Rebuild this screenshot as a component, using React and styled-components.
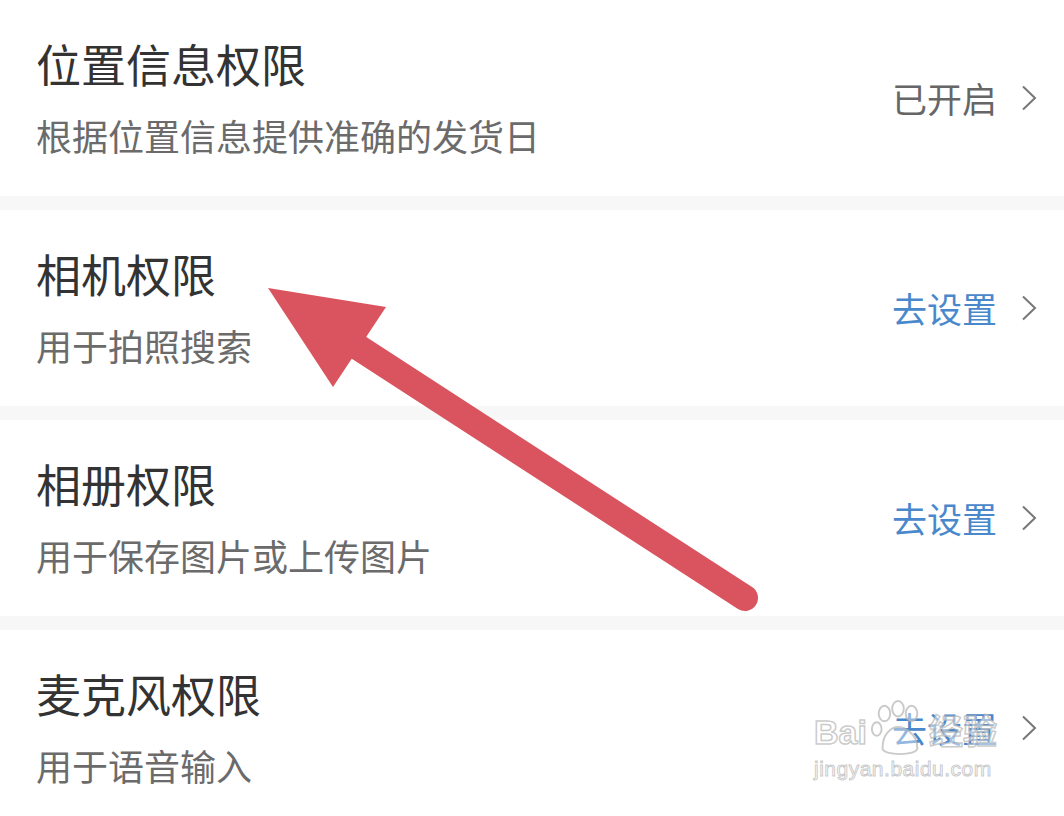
import React from "react";
import styled, { createGlobalStyle } from "styled-components";

const GlobalStyle = createGlobalStyle`
  html, body {
    margin: 0;
    padding: 0;
    background: #f7f7f7;
    overflow: hidden;
  }
  body {
    font-family: "Noto Sans CJK SC", "Noto Sans", sans-serif;
  }
`;

const items = [
  { title: "位置信息权限", desc: "根据位置信息提供准确的发货日", action: "已开启", on: true },
  { title: "相机权限", desc: "用于拍照搜索", action: "去设置" },
  { title: "相册权限", desc: "用于保存图片或上传图片", action: "去设置" },
  { title: "麦克风权限", desc: "用于语音输入", action: "去设置" },
];

export default function App() {
  return (
    <Page>
      <GlobalStyle />
      <List>
        {items.map((it) => (
          <Row key={it.title}>
            <Info>
              <Title>{it.title}</Title>
              <Desc>{it.desc}</Desc>
            </Info>
            <Action $on={it.on}>
              {it.action}
              <Chevron viewBox="0 0 16 26">
                <path d="M2 1.5 L14 13 L2 24.5" />
              </Chevron>
            </Action>
          </Row>
        ))}
      </List>
      <Arrow viewBox="0 0 1064 816">
        <line x1="350" y1="342" x2="745" y2="598" />
        <polygon points="268,288 386,307 333,387" />
      </Arrow>
      <Watermark>
        <Brand>
          <span>Bai</span>
          <Paw viewBox="0 0 60 60">
            <ellipse cx="16" cy="14" rx="6" ry="8" />
            <ellipse cx="30" cy="9" rx="6" ry="8" />
            <ellipse cx="44" cy="14" rx="6" ry="8" />
            <ellipse cx="8" cy="30" rx="5" ry="7" />
            <path d="M14 50 C14 34 24 28 30 28 C36 28 50 34 50 50 C50 58 14 58 14 50 Z" />
          </Paw>
          <span>经验</span>
        </Brand>
        <Url>jingyan.baidu.com</Url>
      </Watermark>
    </Page>
  );
}

const Page = styled.div`
  position: relative;
  width: 1064px;
  height: 816px;
  overflow: hidden;
`;

const List = styled.div`
  display: flex;
  flex-direction: column;
  gap: 14px;
`;

const Row = styled.div`
  height: 196px;
  box-sizing: border-box;
  background: #ffffff;
  display: flex;
  align-items: center;
  justify-content: space-between;
  padding: 0 27px 0 36px;
`;

const Info = styled.div`
  display: flex;
  flex-direction: column;
  gap: 23px;
  margin-top: -2px;
`;

const Title = styled.div`
  font-size: 45px;
  line-height: 52px;
  color: #333333;
`;

const Desc = styled.div`
  font-size: 36px;
  line-height: 44px;
  color: #6b6b6b;
`;

const Action = styled.div`
  display: flex;
  align-items: center;
  gap: 24px;
  font-size: 35px;
  line-height: 40px;
  color: ${(p) => (p.$on ? "#666666" : "#4a88cc")};
`;

const Chevron = styled.svg`
  width: 16px;
  height: 26px;
  fill: none;
  stroke: #777777;
  stroke-width: 2;
`;

const Arrow = styled.svg`
  position: absolute;
  left: 0;
  top: 0;
  width: 1064px;
  height: 816px;
  pointer-events: none;
  line {
    stroke: #d9545e;
    stroke-width: 26;
    stroke-linecap: round;
  }
  polygon {
    fill: #d9545e;
  }
`;

const Watermark = styled.div`
  position: absolute;
  left: 814px;
  top: 700px;
  display: flex;
  flex-direction: column;
  align-items: flex-start;
  pointer-events: none;
  font-family: "Liberation Sans", "Noto Sans CJK SC", sans-serif;
`;

const Brand = styled.div`
  display: flex;
  align-items: flex-end;
  gap: 2px;
  font-size: 34px;
  line-height: 52px;
  color: rgba(255, 255, 255, 0.5);
  -webkit-text-stroke: 1.5px rgba(180, 180, 180, 0.7);
  font-weight: bold;
`;

const Paw = styled.svg`
  width: 58px;
  height: 58px;
  fill: rgba(255, 255, 255, 0.4);
  stroke: rgba(180, 180, 180, 0.7);
  stroke-width: 2;
`;

const Url = styled.div`
  font-size: 21px;
  line-height: 22px;
  color: rgba(255, 255, 255, 0.4);
  -webkit-text-stroke: 1px rgba(180, 180, 180, 0.7);
  letter-spacing: 0.5px;
`;
